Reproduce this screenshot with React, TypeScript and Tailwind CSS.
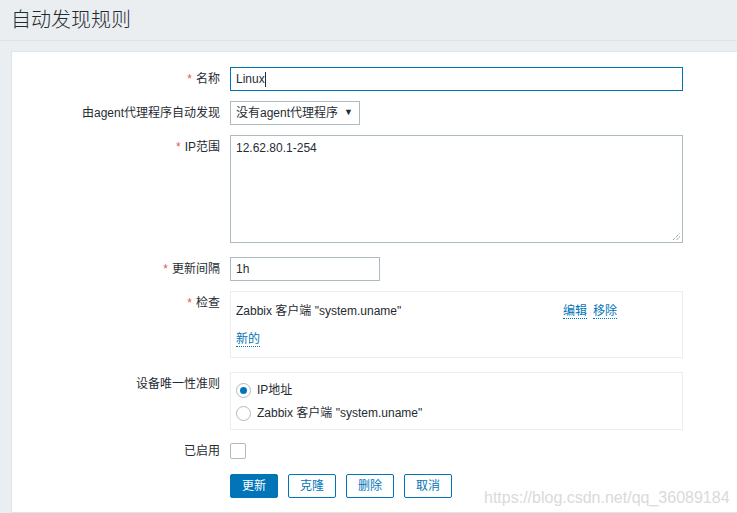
const FONT = "font-['Liberation_Sans','Noto_Sans_CJK_SC',sans-serif]";

function Label({ text, required }: { text: string; required?: boolean }) {
  return (
    <div className="w-[208px] shrink-0 pr-0 text-right leading-[16px] pt-[4px] text-[12px] text-[#1f2c33]">
      {required && <span className="text-[#e45959] mr-[4px]">*</span>}
      {text}
    </div>
  );
}

function Row({ children, className = "" }: { children: React.ReactNode; className?: string }) {
  return <div className={`flex items-start gap-[10px] ${className}`}>{children}</div>;
}

function Link({ children }: { children: React.ReactNode }) {
  return (
    <span className="text-[#0275b8] border-b border-dotted border-[#0275b8] leading-[14px]">
      {children}
    </span>
  );
}

function Radio({ checked }: { checked?: boolean }) {
  return (
    <span className="w-[15px] h-[15px] rounded-full border border-[#acbbc2] bg-white flex items-center justify-center shrink-0">
      {checked && <span className="w-[7px] h-[7px] rounded-full bg-[#0275b8]" />}
    </span>
  );
}

function Button({ children, primary }: { children: React.ReactNode; primary?: boolean }) {
  return (
    <button
      className={`w-[48px] h-[24px] rounded-[2px] border text-[12px] leading-none ${
        primary
          ? "bg-[#0275b8] border-[#0275b8] text-white"
          : "bg-white border-[#0275b8] text-[#0275b8]"
      }`}
    >
      {children}
    </button>
  );
}

export default function App() {
  return (
    <div className={`relative w-[737px] h-[513px] overflow-hidden bg-[#ebeef0] ${FONT} text-[12px] text-[#1f2c33]`}>
      <div className="h-[41px] border-b border-[#dde2e5] px-[11px] pt-[7px]">
        <h1 className="text-[20px] leading-[26px] font-light text-[#1f2c33]">自动发现规则</h1>
      </div>

      <div className="ml-[11px] mt-[10px] w-[800px] h-[462px] bg-white border border-[#dfe4e7] pt-[15px] flex flex-col">
        <Row>
          <Label text="名称" required />
          <div className="w-[453px] h-[24px] border border-[#0275b8] px-[5px] flex items-center">
            <span>Linux</span>
            <span className="w-px h-[15px] bg-[#1f2c33]" />
          </div>
        </Row>

        <Row className="mt-[10px]">
          <Label text="由agent代理程序自动发现" />
          <div className="w-[130px] h-[24px] border border-[#acbbc2] px-[5px] flex items-center justify-between">
            <span>没有agent代理程序</span>
            <span className="text-[9px] text-[#1f2c33] mr-[1px]">▼</span>
          </div>
        </Row>

        <Row className="mt-[10px]">
          <Label text="IP范围" required />
          <div className="relative w-[453px] h-[108px] border border-[#acbbc2] px-[5px] pt-[4px] leading-[16px]">
            12.62.80.1-254
            <svg className="absolute right-[1px] bottom-[1px]" width="9" height="9" viewBox="0 0 9 9">
              <path d="M1 8L8 1M4.5 8L8 4.5" stroke="#6b7478" strokeWidth="1" strokeDasharray="1 1" />
            </svg>
          </div>
        </Row>

        <Row className="mt-[14px]">
          <Label text="更新间隔" required />
          <div className="w-[150px] h-[24px] border border-[#acbbc2] px-[5px] flex items-center">1h</div>
        </Row>

        <Row className="mt-[10px]">
          <Label text="检查" required />
          <div className="w-[453px] h-[67px] border border-[#ebeef0] px-[5px] pt-[11px]">
            <div className="flex items-center h-[16px]">
              <span className="w-[327px]">Zabbix 客户端 "system.uname"</span>
              <Link>编辑</Link>
              <span className="w-[6px]" />
              <Link>移除</Link>
            </div>
            <div className="mt-[11px] h-[16px]">
              <Link>新的</Link>
            </div>
          </div>
        </Row>

        <Row className="mt-[14px]">
          <Label text="设备唯一性准则" />
          <div className="w-[453px] h-[58px] border border-[#ebeef0] px-[5px] pt-[9px] flex flex-col gap-[7px]">
            <div className="flex items-center gap-[6px] h-[16px]">
              <Radio checked />
              <span>IP地址</span>
            </div>
            <div className="flex items-center gap-[6px] h-[16px]">
              <Radio />
              <span>Zabbix 客户端 "system.uname"</span>
            </div>
          </div>
        </Row>

        <Row className="mt-[13px]">
          <div className="w-[208px] shrink-0 text-right leading-[16px]">已启用</div>
          <span className="w-[16px] h-[16px] border border-[#acbbc2] rounded-[2px] bg-white" />
        </Row>

        <Row className="mt-[15px]">
          <div className="w-[208px] shrink-0" />
          <div className="flex gap-[10px]">
            <Button primary>更新</Button>
            <Button>克隆</Button>
            <Button>删除</Button>
            <Button>取消</Button>
          </div>
        </Row>
      </div>

      <div className="absolute left-[484px] top-[486px] text-[16px] text-[#dadada] font-['Liberation_Sans',sans-serif] pointer-events-none">
        https://blog.csdn.net/qq_36089184
      </div>
    </div>
  );
}
